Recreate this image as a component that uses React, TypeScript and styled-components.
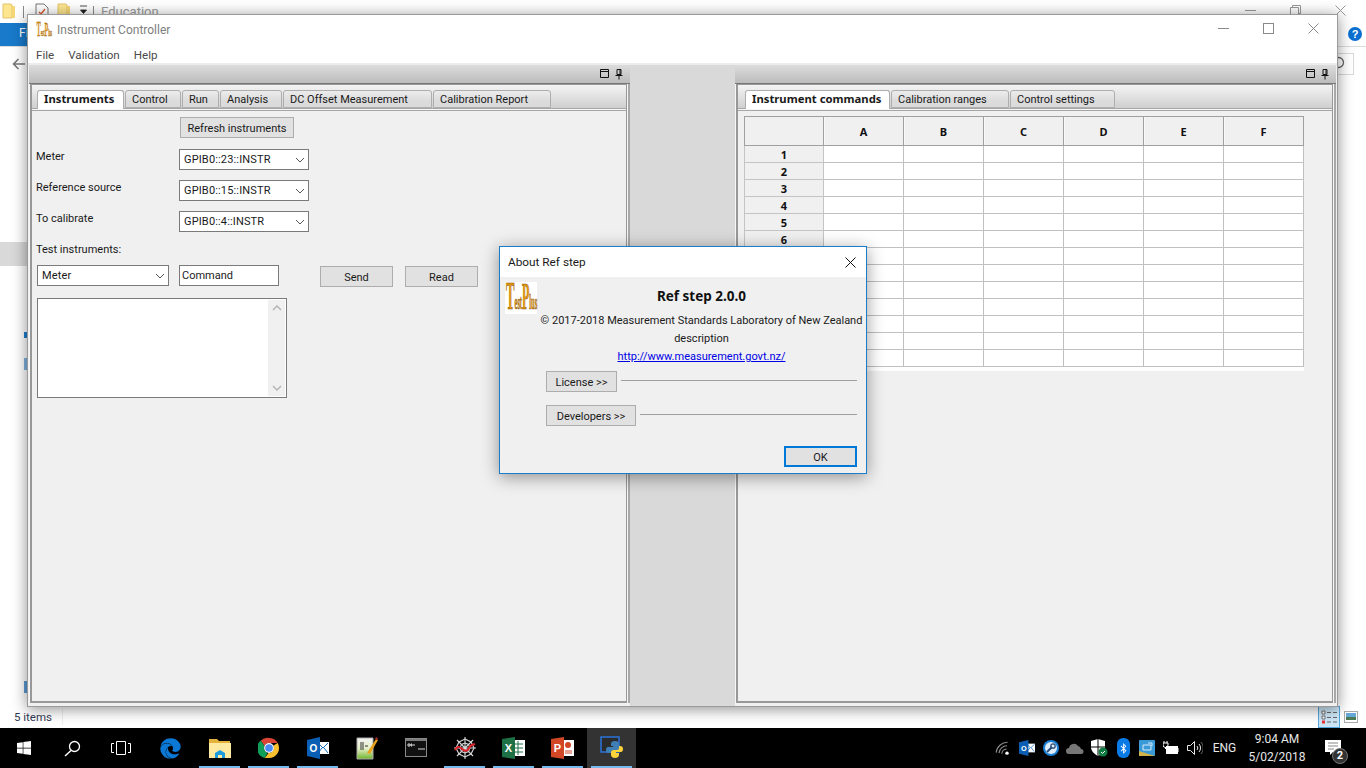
import styled, { createGlobalStyle } from "styled-components";
import { FaEdge, FaWindows, FaBluetoothB } from "react-icons/fa";

const UI_FONT = `Roboto, "Noto Sans", "Liberation Sans", sans-serif`;
const BOLD_FONT = `"Noto Sans", Roboto, "Liberation Sans", sans-serif`;

const GlobalStyle = createGlobalStyle`
  html, body {
    margin: 0;
    padding: 0;
    overflow: hidden;
    background: #fff;
  }
  * { box-sizing: border-box; }
  body {
    font-family: ${UI_FONT};
    font-size: 11px;
    color: #111;
  }
`;

const Desktop = styled.div`
  position: relative;
  width: 1366px;
  height: 768px;
  display: flex;
  flex-direction: column;
  overflow: hidden;
`;

/* ---- explorer window behind ---- */

const Explorer = styled.div`
  flex: 1;
  display: flex;
  flex-direction: column;
  background: #fff;
  min-height: 0;
`;

const QuickBar = styled.div`
  height: 23px;
  display: flex;
  align-items: flex-start;
  padding: 3px 0 0 2px;
  color: #9a9a9a;
  font-size: 13px;
`;

const QuickItem = styled.div<{ $w: number }>`
  width: ${({ $w }) => $w}px;
  flex: none;
`;

const QuickSep = styled.div<{ $w: number }>`
  width: ${({ $w }) => $w}px;
  flex: none;
  height: 12px;
  margin-top: 3px;
  background: linear-gradient(#888, #888) no-repeat left / 1px 100%;
`;

const QuickCaption = styled.span`
  line-height: 18px;
`;

const WinControls = styled.div`
  margin-left: auto;
  width: 101px;
  margin-right: 20px;
  display: flex;
  justify-content: space-between;
  align-items: center;
  height: 14px;
`;

const RibbonRow = styled.div`
  height: 24px;
  display: flex;
  justify-content: space-between;
  border-bottom: 1px solid #dcdcdc;
`;

const FileTab = styled.div`
  width: 28px;
  height: 23px;
  background: #1979ca;
  color: #fff;
  font-size: 12px;
  padding: 3px 0 0 19px;
  overflow: hidden;
`;

const HelpDot = styled.div`
  width: 14px;
  height: 14px;
  margin: 4px 4px 0 0;
  border-radius: 50%;
  background: #0a6fd0;
  color: #fff;
  font: 700 11px/14px "Liberation Sans", sans-serif;
  text-align: center;
`;

const NavRow = styled.div`
  height: 34px;
  display: flex;
  justify-content: space-between;
  align-items: center;
  padding: 0 12px 0 12px;
`;

const SearchStub = styled.div`
  width: 17px;
  height: 22px;
  border: 1px solid #d9d9d9;
  border-left: 0;
  display: flex;
  align-items: center;

  svg {
    margin-left: -9px;
  }
`;

const Sidebar = styled.div`
  flex: 1;
  min-height: 0;
  display: flex;
  flex-direction: column;
  padding-top: 161px;
`;

const SideHighlight = styled.div`
  width: 28px;
  height: 24px;
  background: #d9d9d9;
`;

const SideMark = styled.div<{ $top: number; $h: number; $tone: string }>`
  width: 4px;
  height: ${({ $h }) => $h}px;
  margin: ${({ $top }) => $top}px 0 0 24px;
  background: ${({ $tone }) => $tone};
`;

const StatusBar = styled.div`
  height: 22px;
  display: flex;
  align-items: center;
  padding-left: 14px;
  color: #333b55;
  font-size: 11.5px;
`;

const StatusSep = styled.div`
  width: 1px;
  height: 16px;
  margin-left: 10px;
  background: #eee;
`;

const ViewSwitch = styled.div`
  margin-left: auto;
  display: flex;
  align-items: center;
  padding-right: 4px;
`;

const ViewButton = styled.div<{ $on?: boolean }>`
  width: 22px;
  height: 22px;
  display: flex;
  align-items: center;
  justify-content: center;
  ${({ $on }) => ($on ? "background:#cde6f7;border:1px solid #52a7dc;" : "")}
`;

/* ---- taskbar ---- */

const Taskbar = styled.div`
  height: 40px;
  flex: none;
  background: #000;
  display: flex;
  color: #e8e8e8;
`;

const SystemSlot = styled.div<{ $w: number }>`
  width: ${({ $w }) => $w}px;
  flex: none;
  display: flex;
  align-items: center;
  justify-content: center;
  color: #fff;
`;

const TaskSlot = styled.div<{ $open?: boolean; $active?: boolean }>`
  position: relative;
  width: 49px;
  flex: none;
  display: flex;
  align-items: center;
  justify-content: center;
  background: ${({ $active }) => ($active ? "#333" : "transparent")};
  ${({ $open }) =>
    $open
      ? `&::after {
    content: "";
    position: absolute;
    left: 4px;
    right: 4px;
    bottom: 0;
    height: 2px;
    background: #76b9ed;
  }`
      : ""}
`;

const Tray = styled.div`
  margin-left: auto;
  display: flex;
  align-items: center;
`;

const TraySlot = styled.div`
  width: 24px;
  height: 40px;
  display: flex;
  align-items: center;
  justify-content: center;
`;

const LangLabel = styled.div`
  width: 35px;
  text-align: center;
  font-size: 12px;
`;

const Clock = styled.div`
  width: 70px;
  text-align: center;
  font-size: 12px;
  line-height: 18px;
  margin-right: 7px;
`;

const NotifySlot = styled.div`
  position: relative;
  width: 47px;
  height: 40px;
  display: flex;
  align-items: center;
  padding-left: 6px;
`;

const NotifyBadge = styled.div`
  position: absolute;
  left: 13px;
  top: 20px;
  width: 16px;
  height: 16px;
  border-radius: 50%;
  background: #333;
  border: 1px solid #777;
  color: #fff;
  font-size: 11px;
  font-weight: 700;
  line-height: 14px;
  text-align: center;
`;

/* ---- main app window ---- */

const AppWindow = styled.div`
  position: absolute;
  left: 27px;
  top: 14px;
  width: 1311px;
  height: 693px;
  display: flex;
  flex-direction: column;
  background: #f0f0f0;
  border: 1px solid #9a9a9a;
  box-shadow: 0 2px 14px rgba(0, 0, 0, 0.45);
`;

const TitleBar = styled.div`
  height: 25px;
  flex: none;
  background: #fff;
  display: flex;
  align-items: center;
  padding: 5px 0 0 8px;
  color: #7f7f7f;
  font-size: 12px;
`;

const TitleText = styled.span`
  margin-left: 5px;
`;

const TitleControls = styled.div`
  margin-left: auto;
  width: 101px;
  margin-right: 18px;
  margin-top: -4px;
  display: flex;
  justify-content: space-between;
  align-items: center;
`;

const MenuBar = styled.div`
  height: 25px;
  flex: none;
  background: #fff;
  border-bottom: 2px solid #ececec;
  display: flex;
  gap: 14px;
  padding: 8px 0 0 8px;
  color: #4a4a4a;
  font-size: 11.6px;
`;

const Workspace = styled.div`
  flex: 1;
  min-height: 0;
  display: flex;
  padding: 0 0 3px 1px;
`;

const Dock = styled.div`
  width: 601px;
  flex: none;
  display: flex;
  flex-direction: column;
`;

const DockGutter = styled.div`
  width: 105px;
  flex: none;
  margin-bottom: -3px;
  background: #d9d9d9;
`;

const DockHeader = styled.div`
  height: 19px;
  flex: none;
  display: flex;
  justify-content: flex-end;
  align-items: center;
  gap: 5px;
  padding-right: 7px;
  background: linear-gradient(#dcdcdc, #bcbcbc);
  border-bottom: 1px solid #777;
`;

const DockFrame = styled.div`
  flex: 1;
  min-height: 0;
  display: flex;
  background: #f6f6f6;
  border-right: 2px solid #a8a8a8;
`;

const DockBody = styled.div`
  flex: 1;
  min-width: 0;
  margin: 0 1px 0 1px;
  display: flex;
  flex-direction: column;
  border: solid #989898;
  border-width: 1px 1px 2px 2px;
`;

const TabStrip = styled.div<{ $inset: number }>`
  height: 24px;
  flex: none;
  display: flex;
  align-items: flex-end;
  gap: 1px;
  padding-left: ${({ $inset }) => $inset}px;
  background: linear-gradient(#f4f4f4, #cfcfcf);
  border-bottom: 1px solid #a6a6a6;
`;

const Tab = styled.div<{ $w: number; $active?: boolean }>`
  width: ${({ $w }) => $w}px;
  height: ${({ $active }) => ($active ? 19 : 18)}px;
  margin-bottom: ${({ $active }) => ($active ? -1 : 0)}px;
  flex: none;
  padding: ${({ $active }) => ($active ? "0 0 0 6px" : "1px 0 0 6px")};
  border: 1px solid #aeaeae;
  border-bottom-width: ${({ $active }) => ($active ? 0 : 1)}px;
  border-radius: 3px 3px 0 0;
  font-family: ${({ $active }) => ($active ? BOLD_FONT : UI_FONT)};
  font-size: ${({ $active }) => ($active ? 11.3 : 11)}px;
  font-weight: ${({ $active }) => ($active ? 700 : 400)};
  color: #1a1a1a;
  line-height: 15px;
  white-space: nowrap;
  background: ${({ $active }) => ($active ? "#fff" : "linear-gradient(#ececec, #dcdcdc 60%, #dadada)")};
`;

const Pane = styled.div`
  flex: 1;
  min-height: 0;
  margin-top: 1px;
  border-top: 1px solid #a6a6a6;
  background: #f0f0f0;
`;

const FormPane = styled(Pane)`
  display: flex;
  flex-direction: column;
  align-items: flex-start;
  padding: 6px 0 0 5px;
`;

const FieldRow = styled.div<{ $gapTop?: number }>`
  display: grid;
  grid-template-columns: 142px 130px;
  align-items: start;
  margin-top: ${({ $gapTop }) => $gapTop ?? 10}px;
`;

const FieldLabel = styled.div`
  height: 15px;
  margin-left: -1px;
  line-height: 15px;
  color: #1a1a1a;
`;

const PushButton = styled.div<{ $w: number; $default?: boolean }>`
  width: ${({ $w }) => $w}px;
  height: 21px;
  flex: none;
  display: flex;
  align-items: center;
  justify-content: center;
  padding-top: 1px;
  background: #e1e1e1;
  border: ${({ $default }) => ($default ? "2px solid #0078d7" : "1px solid #adadad")};
  color: #1a1a1a;
`;

const RefreshSlot = styled.div`
  margin-left: 143px;
`;

const SelectBox = styled.div<{ $w: number }>`
  width: ${({ $w }) => $w}px;
  height: 21px;
  flex: none;
  display: flex;
  align-items: center;
  justify-content: space-between;
  padding: 0 3px 0 4px;
  letter-spacing: 0.15px;
  background: #fff;
  border: 1px solid #7a7a7a;
  color: #1a1a1a;
`;

const TestLabel = styled(FieldLabel)`
  margin-top: 10px;
`;

const CommandRow = styled.div`
  display: flex;
  align-items: flex-start;
  margin-top: 8px;
`;

const CommandInput = styled.div`
  width: 100px;
  height: 21px;
  margin-left: 10px;
  padding-left: 2px;
  line-height: 19px;
  background: #fff;
  border: 1px solid #7a7a7a;
  color: #1a1a1a;
`;

const ActionButtons = styled.div`
  display: flex;
  gap: 12px;
  margin: 1px 0 0 41px;
`;

const LogBox = styled.div`
  width: 250px;
  height: 100px;
  margin-top: 11px;
  display: flex;
  justify-content: flex-end;
  padding: 1px;
  background: #fff;
  border: 1px solid #7a7a7a;
`;

const LogScroll = styled.div`
  width: 17px;
  display: flex;
  flex-direction: column;
  justify-content: space-between;
  align-items: center;
  padding: 5px 0;
  background: #f0f0f0;
`;

const TablePane = styled(Pane)`
  padding: 5px 0 0 6px;
`;

const Sheet = styled.div`
  width: 560px;
  display: grid;
  grid-template-columns: repeat(7, 80px);
  grid-template-rows: 30px;
  grid-auto-rows: 17px;
  padding-bottom: 4px;
  background: #fff;
`;

const CornerCell = styled.div`
  background: #f0f0f0;
  border: 1px solid #a0a0a0;
`;

const ColHead = styled.div`
  display: flex;
  align-items: center;
  justify-content: center;
  font-family: ${BOLD_FONT};
  font-weight: 700;
  background: #f0f0f0;
  border: solid #a0a0a0;
  border-width: 1px 1px 1px 0;
  box-shadow: inset 1px 0 0 #fafafa;
`;

const RowHead = styled.div`
  display: flex;
  align-items: center;
  justify-content: center;
  padding-top: 1px;
  font-family: ${BOLD_FONT};
  font-weight: 700;
  background: #f0f0f0;
  border: solid #c4c4c4;
  border-width: 0 1px 1px 1px;
`;

const DataCell = styled.div`
  background: #fff;
  border: solid #c0c0c0;
  border-width: 0 1px 1px 0;
`;

const SheetRow = styled.div`
  display: contents;
`;

/* ---- about dialog ---- */

const AboutDialog = styled.div`
  position: absolute;
  left: 499px;
  top: 246px;
  width: 368px;
  height: 228px;
  display: flex;
  flex-direction: column;
  background: #f0f0f0;
  border: 1px solid #1a7dc9;
  box-shadow: 0 3px 16px rgba(0, 0, 0, 0.4);
`;

const DialogTitle = styled.div`
  height: 30px;
  flex: none;
  background: #fff;
  display: flex;
  align-items: center;
  justify-content: space-between;
  padding: 0 10px 0 8px;
  color: #1a1a1a;
  font-size: 11.8px;
`;

const DialogBody = styled.div`
  flex: 1;
  display: grid;
  grid-template-columns: 37px minmax(0, 1fr);
  min-height: 0;
`;

const DialogIcon = styled.div`
  padding: 5px 0 0 5px;
`;

const DialogMain = styled.div`
  display: flex;
  flex-direction: column;
`;

const AppName = styled.div`
  height: 18px;
  margin-top: 10px;
  text-align: center;
  font-family: ${BOLD_FONT};
  font-size: 13.5px;
  font-weight: 700;
  line-height: 18px;
`;

const InfoLine = styled.div`
  height: 18px;
  text-align: center;
  line-height: 18px;
  white-space: nowrap;
  color: #1a1a1a;
`;

const CopyLine = styled(InfoLine)`
  margin-top: 7px;
`;

const LinkText = styled.a`
  color: #0000e6;
  text-decoration: underline;
`;

const Expander = styled.div<{ $top: number }>`
  display: flex;
  align-items: center;
  gap: 4px;
  margin: ${({ $top }) => $top}px 9px 0 9px;
`;

const ExpanderRule = styled.div`
  flex: 1;
  height: 1px;
  margin-top: -3px;
  background: #a0a0a0;
`;

const DialogFoot = styled.div`
  margin: auto 9px 6px 0;
  display: flex;
  justify-content: flex-end;
`;

/* ---- drawings ---- */

const Logo = ({ size }: { size: number }) => (
  <svg width={size} height={size} viewBox="0 0 32 32" overflow="visible" style={{ display: "block" }}>
    {size > 20 && <rect width="32" height="32" fill="#fff" />}
    <text
      transform="translate(1 27) scale(.4 1.25)"
      fontFamily='"Liberation Serif", serif'
      fontWeight="700"
      fill="#e79a12"
      stroke="#7a4a08"
      strokeWidth="0.5"
    >
      <tspan fontSize="32">T</tspan>
      <tspan fontSize="16">est</tspan>
      <tspan fontSize="30">P</tspan>
      <tspan fontSize="16">lus</tspan>
    </text>
  </svg>
);

const Chevron = () => (
  <svg width="10" height="6" viewBox="0 0 10 6">
    <path d="M1 1l4 4 4-4" fill="none" stroke="#555" strokeWidth="1" />
  </svg>
);

const ChevronUp = () => (
  <svg width="10" height="6" viewBox="0 0 10 6">
    <path d="M1 5l4-4 4 4" fill="none" stroke="#b5b5b5" strokeWidth="1.5" />
  </svg>
);

const ChevronLow = () => (
  <svg width="10" height="6" viewBox="0 0 10 6">
    <path d="M1 1l4 4 4-4" fill="none" stroke="#b5b5b5" strokeWidth="1.5" />
  </svg>
);

const MinGlyph = ({ color }: { color: string }) => (
  <svg width="11" height="11" viewBox="0 0 11 11">
    <path d="M0 5.5h11" stroke={color} />
  </svg>
);

const MaxGlyph = ({ color }: { color: string }) => (
  <svg width="11" height="11" viewBox="0 0 11 11">
    <rect x=".5" y=".5" width="10" height="10" fill="none" stroke={color} />
  </svg>
);

const RestoreGlyph = ({ color }: { color: string }) => (
  <svg width="11" height="11" viewBox="0 0 11 11">
    <path d="M.5 2.5h8v8h-8zM2.5 2.5v-2h8v8h-2" fill="none" stroke={color} />
  </svg>
);

const CloseGlyph = ({ color, size = 11 }: { color: string; size?: number }) => (
  <svg width={size} height={size} viewBox="0 0 11 11">
    <path d="M.5.5l10 10M10.5.5l-10 10" stroke={color} fill="none" />
  </svg>
);

const FloatGlyph = () => (
  <svg width="10" height="10" viewBox="0 0 10 10">
    <path d="M.5.5h8v8h-8zM.5 2.5h8" fill="none" stroke="#111" />
  </svg>
);

const PinGlyph = () => (
  <svg width="8" height="11" viewBox="0 0 8 11">
    <path d="M2 .5h4v5h-4zM.5 6.5h7M4 6.5v4M5 1v4" fill="none" stroke="#111" />
  </svg>
);

const YellowFolder = () => (
  <svg width="14" height="16" viewBox="0 0 14 16">
    <path d="M1 1h8l1 1v13H1z" fill="#fde68f" stroke="#e2c36b" />
    <path d="M10 3h3v12h-3z" fill="#f6d676" />
  </svg>
);

const CheckDoc = () => (
  <svg width="14" height="16" viewBox="0 0 14 16">
    <path d="M1 1h8l4 4v10H1z" fill="#fff" stroke="#777" />
    <path d="M4 9l2 2 4-5" fill="none" stroke="#d9552b" strokeWidth="1.3" />
  </svg>
);

const DropMark = () => (
  <svg width="8" height="10" viewBox="0 0 8 10">
    <path d="M0 1h7M.5 5h6L3.5 8.5z" fill="#222" stroke="#222" strokeWidth=".8" />
  </svg>
);

const BackArrow = () => (
  <svg width="14" height="12" viewBox="0 0 14 12">
    <path d="M13 6H2M6.5 1L1.5 6l5 5" fill="none" stroke="#777" strokeWidth="1.6" />
  </svg>
);

const SearchGlyph = ({ color = "#fff" }: { color?: string }) => (
  <svg width="17" height="17" viewBox="0 0 17 17">
    <circle cx="10.5" cy="6.5" r="5" fill="none" stroke={color} strokeWidth="1.3" />
    <path d="M7 10.5L1 16" stroke={color} strokeWidth="1.5" />
  </svg>
);

const TaskViewGlyph = () => (
  <svg width="20" height="14" viewBox="0 0 20 14">
    <path d="M5.5.5h9v13h-9zM3 2.5H.5v9H3M17 2.5h2.5v9H17" fill="none" stroke="#fff" />
  </svg>
);

const ExplorerGlyph = () => (
  <svg width="22" height="20" viewBox="0 0 22 20">
    <path d="M0 1h8l2 2h11v4H0z" fill="#e3b23c" />
    <path d="M0 5h22v15H0z" fill="#fde9a0" />
    <path d="M6 15l5-3 5 3v5h-3v-3H9v3H6z" fill="#1e9bdc" />
  </svg>
);

const ChromeGlyph = () => (
  <svg width="22" height="22" viewBox="0 0 24 24">
    <path d="M12 1a11 11 0 0 1 9.5 5.5H12a5.5 5.5 0 0 0-5 3.2L3 3.8A11 11 0 0 1 12 1z" fill="#db4437" />
    <path d="M3 3.8l4 6a5.5 5.5 0 0 0 3.5 7.5l-3 5.7A11 11 0 0 1 3 3.8z" fill="#0f9d58" />
    <path d="M21.5 6.5A11 11 0 0 1 12 23H7.5l4-5.5a5.5 5.5 0 0 0 5-8z" fill="#fbc02d" />
    <circle cx="12" cy="12" r="5.4" fill="#fff" />
    <circle cx="12" cy="12" r="4.2" fill="#4c8bf5" />
  </svg>
);

const OutlookGlyph = ({ size = 22 }: { size?: number }) => (
  <svg width={size} height={size} viewBox="0 0 22 22">
    <path d="M10 5h12v12H10z" fill="#fff" />
    <path d="M11 6l5 5 5-5M11 16l4-5M21 16l-4-5" fill="none" stroke="#0f6cbd" />
    <path d="M0 3l13-3v22L0 19z" fill="#0a5fb4" />
    <text x="6.5" y="15" textAnchor="middle" fontSize="10" fontWeight="700" fontFamily='"Liberation Sans", sans-serif' fill="#fff">O</text>
  </svg>
);

const NoteGlyph = () => (
  <svg width="22" height="24" viewBox="0 0 22 24">
    <defs>
      <linearGradient id="noteFill" x1="0" y1="0" x2="0" y2="1">
        <stop offset="0" stopColor="#f4f4f4" />
        <stop offset=".5" stopColor="#e5efc7" />
        <stop offset="1" stopColor="#6fb52c" />
      </linearGradient>
    </defs>
    <path d="M1 2h16v21H1z" fill="url(#noteFill)" stroke="#aaa" />
    <path d="M5 6v8M7 6v8M9 10h3" stroke="#333" />
    <path d="M11 17L20 3l2 1-8 14z" fill="#e8a21c" />
    <path d="M19 2l2-1 1 2-2 1z" fill="#a52a2a" />
  </svg>
);

const CmdGlyph = () => (
  <svg width="22" height="20" viewBox="0 0 22 20">
    <rect x=".5" y=".5" width="21" height="18" fill="#111" stroke="#8a8a8a" />
    <path d="M1 1h20v2H1z" fill="#7b7b7b" />
    <path d="M3 6h2v2H3zM6 6h1v2H6zM8 7h2M13 11h7" stroke="#ddd" />
  </svg>
);

const WebGlyph = () => (
  <svg width="24" height="24" viewBox="0 0 24 24">
    <g fill="none" stroke="#d8d8d8" strokeWidth="1.1">
      <path d="M12 1v22M1 12h22M4 4l16 16M20 4L4 20" />
      <path d="M12 3l6 3 3 6-3 6-6 3-6-3-3-6 3-6z" />
      <path d="M12 7l3.5 1.5L17 12l-1.5 3.5L12 17l-3.5-1.5L7 12l1.5-3.5z" />
    </g>
    <path d="M2 14c3-5 5-3 7-1s5 3 7-1 4-3 6-4" fill="none" stroke="#e01f26" strokeWidth="2" />
  </svg>
);

const ExcelGlyph = () => (
  <svg width="23" height="22" viewBox="0 0 23 22">
    <path d="M10 3h13v16H10z" fill="#fff" />
    <path d="M12 7h9M12 11h9M12 15h9M16 4v14" stroke="#1e7145" />
    <path d="M0 2l13-2v22L0 20z" fill="#1e7145" />
    <text x="6.5" y="15" textAnchor="middle" fontSize="11" fontWeight="700" fontFamily='"Liberation Sans", sans-serif' fill="#fff">X</text>
  </svg>
);

const PowerPointGlyph = () => (
  <svg width="23" height="22" viewBox="0 0 23 22">
    <path d="M10 3h13v16H10z" fill="#fff" />
    <circle cx="17" cy="8" r="3" fill="#d24726" />
    <path d="M14 14h7M14 16h7" stroke="#d24726" />
    <path d="M0 2l13-2v22L0 20z" fill="#d24726" />
    <text x="6.5" y="15" textAnchor="middle" fontSize="11" fontWeight="700" fontFamily='"Liberation Sans", sans-serif' fill="#fff">P</text>
  </svg>
);

const PythonGlyph = () => (
  <svg width="24" height="24" viewBox="0 0 24 24">
    <rect x="1" y="1" width="18" height="15" fill="#2b2b2b" stroke="#2b6fd0" strokeWidth="1.6" />
    <path d="M11 8c0-2 1-3 4-3s4 1 4 3v4c0 1.5-1 2-2 2h-4c-1 0-2 1-2 2v1H8c-1 0-2-1-2-3s1-3 2-3h5v-1h-2z" fill="#3f7fb5" />
    <path d="M20 10c2 0 3 1 3 3s-1 3-2 3h-5v1h3v2c0 2-2 3-4 3s-4-1-4-3v-3c0-1 1-2 2-2h4c1 0 2-1 2-2v-2z" fill="#ffd43b" />
  </svg>
);

const WifiGlyph = () => (
  <svg width="16" height="16" viewBox="0 0 14 14">
    <g fill="none" stroke="#8a8a8a">
      <path d="M1 11a10 10 0 0 1 10-9" />
      <path d="M3.5 11.5a7 7 0 0 1 7-6.5" />
      <path d="M6 12a4 4 0 0 1 4-4" />
    </g>
    <circle cx="10.5" cy="11.5" r="1.5" fill="#fff" />
  </svg>
);

const WrenchGlyph = () => (
  <svg width="16" height="16" viewBox="0 0 16 16">
    <circle cx="8" cy="8" r="8" fill="#1c7fd6" />
    <circle cx="8" cy="8" r="6" fill="#dfeefa" />
    <path d="M4 12l5-5" stroke="#2a4d7a" strokeWidth="2" />
    <circle cx="10" cy="6" r="2.2" fill="none" stroke="#2a4d7a" strokeWidth="1.3" />
  </svg>
);

const CloudGlyph = () => (
  <svg width="18" height="11" viewBox="0 0 18 11">
    <path d="M3 11a3 3 0 0 1 0-6 5 5 0 0 1 9-2 4 4 0 0 1 3 3 2.5 2.5 0 0 1 0 5z" fill="#777" />
  </svg>
);

const ShieldGlyph = () => (
  <svg width="17" height="18" viewBox="0 0 17 18">
    <path d="M7 0l7 2v6c0 4-3 7-7 9-4-2-7-5-7-9V2z" fill="#fff" />
    <path d="M7 0v17M0 8h14" stroke="#000" />
    <circle cx="12" cy="13" r="4.5" fill="#107c41" />
    <path d="M10 13l1.5 1.5L14 12" fill="none" stroke="#fff" />
  </svg>
);

const BluetoothBadge = styled.div`
  width: 13px;
  height: 20px;
  border-radius: 6px;
  background: #0a7ae6;
  color: #fff;
  display: flex;
  align-items: center;
  justify-content: center;
  font-size: 11px;
`;

const MonitorGlyph = () => (
  <svg width="16" height="16" viewBox="0 0 16 16">
    <rect width="16" height="16" rx="1" fill="#3a9ad8" />
    <path d="M0 11l16 5H0z" fill="#d2b24a" />
    <path d="M4 5h8v5H4zM9 3h4v3" fill="none" stroke="#d8ecfa" />
  </svg>
);

const BatteryGlyph = () => (
  <svg width="16" height="14" viewBox="0 0 16 14">
    <path d="M1 0v2M4 0v2M0 2h5v2a2.5 2.5 0 0 1-5 0zM2.5 6v2" fill="none" stroke="#fff" />
    <rect x="3.5" y="5.5" width="11" height="7" fill="#fff" stroke="#fff" />
    <path d="M15 7v4" stroke="#fff" />
  </svg>
);

const SpeakerGlyph = () => (
  <svg width="16" height="14" viewBox="0 0 16 14">
    <path d="M.5 4.5h3l4-4v13l-4-4h-3z" fill="none" stroke="#e8e8e8" />
    <path d="M10 5a3 3 0 0 1 0 4M12 3a6 6 0 0 1 0 8" fill="none" stroke="#e8e8e8" />
    <path d="M14 1a9 9 0 0 1 0 12" fill="none" stroke="#666" />
  </svg>
);

const BubbleGlyph = () => (
  <svg width="16" height="16" viewBox="0 0 16 16">
    <path d="M0 0h16v12H8l-3 3v-3H0z" fill="#fff" />
    <path d="M3 3h10M3 6h10M3 9h6" stroke="#888" />
  </svg>
);

const DetailsGlyph = () => (
  <svg width="16" height="14" viewBox="0 0 16 14">
    <path d="M1 1h3v3H1z" fill="#fff" stroke="#555" strokeWidth=".8" />
    <path d="M1 6h3v3H1z" fill="#fff" stroke="#555" strokeWidth=".8" />
    <path d="M1 10.5h3v3H1z" fill="#e33" />
    <path d="M6 2.5h4M12 2.5h4M6 7.5h4M12 7.5h4M6 12h4M12 12h4" stroke="#666" />
  </svg>
);

const ThumbGlyph = () => (
  <svg width="14" height="12" viewBox="0 0 14 12">
    <rect x=".5" y=".5" width="13" height="11" fill="#fff" stroke="#aaa" />
    <path d="M2 2h10v4H2z" fill="#66a8d8" />
    <path d="M2 6h10v3H2z" fill="#4c7a55" />
  </svg>
);

/* ---- data ---- */

const LEFT_TABS = [
  { label: "Instruments", w: 87, active: true },
  { label: "Control", w: 56 },
  { label: "Run", w: 37 },
  { label: "Analysis", w: 62 },
  { label: "DC Offset Measurement", w: 149 },
  { label: "Calibration Report", w: 118 },
];

const RIGHT_TABS = [
  { label: "Instrument commands", w: 145, active: true },
  { label: "Calibration ranges", w: 118 },
  { label: "Control settings", w: 105 },
];

const COLUMNS = ["A", "B", "C", "D", "E", "F"];
const ROWS = [1, 2, 3, 4, 5, 6, 7, 8, 9, 10, 11, 12, 13];

const FIELDS = [
  { label: "Meter", value: "GPIB0::23::INSTR" },
  { label: "Reference source", value: "GPIB0::15::INSTR" },
  { label: "To calibrate", value: "GPIB0::4::INSTR" },
];

const APPS = [
  { id: "explorer", icon: <ExplorerGlyph />, open: true },
  { id: "chrome", icon: <ChromeGlyph />, open: true },
  { id: "outlook", icon: <OutlookGlyph />, open: true },
  { id: "notes", icon: <NoteGlyph /> },
  { id: "cmd", icon: <CmdGlyph /> },
  { id: "web", icon: <WebGlyph />, open: true },
  { id: "excel", icon: <ExcelGlyph />, open: true },
  { id: "ppt", icon: <PowerPointGlyph />, open: true },
  { id: "python", icon: <PythonGlyph />, open: true, active: true },
];

const DockHead = () => (
  <DockHeader>
    <FloatGlyph />
    <PinGlyph />
  </DockHeader>
);

const App = () => (
  <Desktop>
    <GlobalStyle />
    <Explorer>
      <QuickBar>
        <QuickItem $w={21}><YellowFolder /></QuickItem>
        <QuickSep $w={12} />
        <QuickItem $w={22}><CheckDoc /></QuickItem>
        <QuickItem $w={23}><YellowFolder /></QuickItem>
        <QuickItem $w={13}><DropMark /></QuickItem>
        <QuickSep $w={8} />
        <QuickCaption>Education</QuickCaption>
        <WinControls>
          <MinGlyph color="#999" />
          <RestoreGlyph color="#999" />
          <CloseGlyph color="#999" />
        </WinControls>
      </QuickBar>
      <RibbonRow>
        <FileTab>Fi</FileTab>
        <HelpDot>?</HelpDot>
      </RibbonRow>
      <NavRow>
        <BackArrow />
        <SearchStub><SearchGlyph color="#666" /></SearchStub>
      </NavRow>
      <Sidebar>
        <SideHighlight />
        <SideMark $top={66} $h={6} $tone="#1f7fd0" />
        <SideMark $top={20} $h={12} $tone="#7fb2de" />
        <SideMark $top={311} $h={12} $tone="#5b9bd5" />
      </Sidebar>
      <StatusBar>
        5 items
        <StatusSep />
        <ViewSwitch>
          <ViewButton $on><DetailsGlyph /></ViewButton>
          <ViewButton><ThumbGlyph /></ViewButton>
        </ViewSwitch>
      </StatusBar>
    </Explorer>

    <Taskbar>
      <SystemSlot $w={48}><FaWindows size={16} /></SystemSlot>
      <SystemSlot $w={48}><SearchGlyph /></SystemSlot>
      <SystemSlot $w={50}><TaskViewGlyph /></SystemSlot>
      <TaskSlot><FaEdge size={21} color="#0a78d4" /></TaskSlot>
      {APPS.map((app) => (
        <TaskSlot key={app.id} $open={app.open} $active={app.active}>
          {app.icon}
        </TaskSlot>
      ))}
      <Tray>
        <TraySlot><WifiGlyph /></TraySlot>
        <TraySlot><OutlookGlyph size={16} /></TraySlot>
        <TraySlot><WrenchGlyph /></TraySlot>
        <TraySlot><CloudGlyph /></TraySlot>
        <TraySlot><ShieldGlyph /></TraySlot>
        <TraySlot><BluetoothBadge><FaBluetoothB /></BluetoothBadge></TraySlot>
        <TraySlot><MonitorGlyph /></TraySlot>
        <TraySlot><BatteryGlyph /></TraySlot>
        <TraySlot><SpeakerGlyph /></TraySlot>
        <LangLabel>ENG</LangLabel>
        <Clock>
          9:04 AM
          <br />
          5/02/2018
        </Clock>
        <NotifySlot>
          <BubbleGlyph />
          <NotifyBadge>2</NotifyBadge>
        </NotifySlot>
      </Tray>
    </Taskbar>

    <AppWindow>
      <TitleBar>
        <Logo size={16} />
        <TitleText>Instrument Controller</TitleText>
        <TitleControls>
          <MinGlyph color="#8a8a8a" />
          <MaxGlyph color="#8a8a8a" />
          <CloseGlyph color="#8a8a8a" />
        </TitleControls>
      </TitleBar>
      <MenuBar>
        <span>File</span>
        <span>Validation</span>
        <span>Help</span>
      </MenuBar>
      <Workspace>
        <Dock>
          <DockHead />
          <DockFrame>
            <DockBody>
              <TabStrip $inset={5}>
                {LEFT_TABS.map((tab) => (
                  <Tab key={tab.label} $w={tab.w} $active={tab.active}>{tab.label}</Tab>
                ))}
              </TabStrip>
              <FormPane>
                <RefreshSlot><PushButton $w={114}>Refresh instruments</PushButton></RefreshSlot>
                {FIELDS.map((field, i) => (
                  <FieldRow key={field.label} $gapTop={i === 0 ? 11 : 10}>
                    <FieldLabel>{field.label}</FieldLabel>
                    <SelectBox $w={130}>
                      {field.value}
                      <Chevron />
                    </SelectBox>
                  </FieldRow>
                ))}
                <TestLabel>Test instruments:</TestLabel>
                <CommandRow>
                  <SelectBox $w={132}>
                    Meter
                    <Chevron />
                  </SelectBox>
                  <CommandInput>Command</CommandInput>
                  <ActionButtons>
                    <PushButton $w={73}>Send</PushButton>
                    <PushButton $w={73}>Read</PushButton>
                  </ActionButtons>
                </CommandRow>
                <LogBox>
                  <LogScroll>
                    <ChevronUp />
                    <ChevronLow />
                  </LogScroll>
                </LogBox>
              </FormPane>
            </DockBody>
          </DockFrame>
        </Dock>
        <DockGutter />
        <Dock>
          <DockHead />
          <DockFrame>
            <DockBody>
              <TabStrip $inset={7}>
                {RIGHT_TABS.map((tab) => (
                  <Tab key={tab.label} $w={tab.w} $active={tab.active}>{tab.label}</Tab>
                ))}
              </TabStrip>
              <TablePane>
                <Sheet>
                  <SheetRow>
                    <CornerCell />
                    {COLUMNS.map((col) => <ColHead key={col}>{col}</ColHead>)}
                  </SheetRow>
                  {ROWS.map((row) => (
                    <SheetRow key={row}>
                      <RowHead>{row}</RowHead>
                      {COLUMNS.map((col) => <DataCell key={col} />)}
                    </SheetRow>
                  ))}
                </Sheet>
              </TablePane>
            </DockBody>
          </DockFrame>
        </Dock>
      </Workspace>
    </AppWindow>

    <AboutDialog>
      <DialogTitle>
        About Ref step
        <CloseGlyph color="#111" size={11} />
      </DialogTitle>
      <DialogBody>
        <DialogIcon><Logo size={32} /></DialogIcon>
        <DialogMain>
          <AppName>Ref step 2.0.0</AppName>
          <CopyLine>© 2017-2018 Measurement Standards Laboratory of New Zealand</CopyLine>
          <InfoLine>description</InfoLine>
          <InfoLine><LinkText href="#">http://www.measurement.govt.nz/</LinkText></InfoLine>
          <Expander $top={5}>
            <PushButton $w={71}>License &gt;&gt;</PushButton>
            <ExpanderRule />
          </Expander>
          <Expander $top={13}>
            <PushButton $w={90}>Developers &gt;&gt;</PushButton>
            <ExpanderRule />
          </Expander>
          <DialogFoot><PushButton $w={73} $default>OK</PushButton></DialogFoot>
        </DialogMain>
      </DialogBody>
    </AboutDialog>
  </Desktop>
);

export default App;
